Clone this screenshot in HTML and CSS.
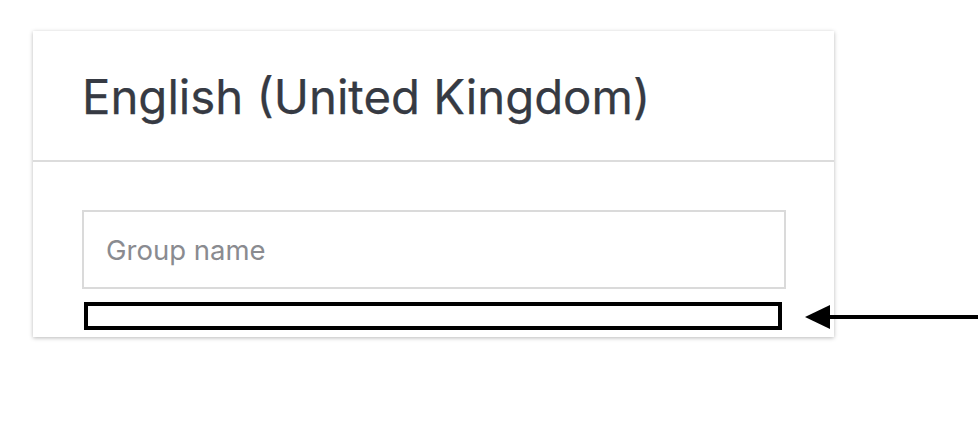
FILE: index.html
```html
<!DOCTYPE html>
<html>
<head>
<meta charset="utf-8">
<link rel="stylesheet" href="styles.css">
</head>
<body>
<div class="card">
  <div class="card-header"><h1 class="title">English (United Kingdom)</h1></div>
  <div class="card-body">
    <input class="field" type="text" placeholder="Group name">
    <div class="highlight"></div>
  </div>
  <svg class="arrow" width="175" height="26" viewBox="0 0 175 26">
    <polygon points="0,13 25,1 25,25" fill="#000"/>
    <rect x="24" y="11" width="151" height="4" fill="#000"/>
  </svg>
</div>
</body>
</html>
```
FILE: styles.css
```css
html, body { margin: 0; padding: 0; background: #fff; }
body { font-family: Inter, "Noto Sans", sans-serif; width: 978px; height: 430px; overflow: hidden; }
.card {
  position: relative;
  margin: 31px 0 0 33px;
  width: 801px;
  height: 306px;
  background: #fff;
  box-shadow: 0 1px 4px rgba(0,0,0,0.28);
  box-sizing: border-box;
}
.card-header {
  height: 131px;
  border-bottom: 2px solid #dcdcdc;
  box-sizing: border-box;
  display: flex;
  align-items: center;
  padding: 2px 0 0 49px;
}
.title {
  margin: 0;
  font-weight: 400;
  font-size: 47.3px;
  line-height: 57px;
  color: #363a43;
  -webkit-text-stroke: 0.25px #363a43;
}
.card-body {
  padding: 48px 0 0 49px;
}
.field {
  display: block;
  width: 704px;
  height: 79px;
  box-sizing: border-box;
  border: 2px solid #dadada;
  padding: 0 0 0 22px;
  font-family: Inter, "Noto Sans", sans-serif;
  font-size: 27.5px;
  color: #363a43;
  outline: none;
}
.field::placeholder { color: #8a8b90; }
.highlight {
  margin: 13px 0 0 2px;
  width: 698px;
  height: 28px;
  border: 4px solid #000;
  box-sizing: border-box;
}
.arrow {
  position: absolute;
  left: 772px;
  top: 273px;
}
```
